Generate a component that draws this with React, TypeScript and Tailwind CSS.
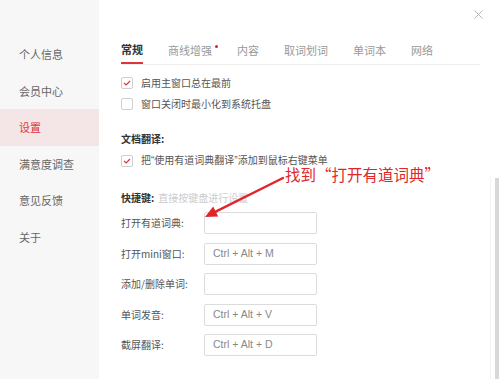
import React from "react";

const CJK = { fontFamily: '"Noto Sans CJK SC", "Noto Sans", sans-serif' };
const LAT = { fontFamily: '"Liberation Sans", "Noto Sans CJK SC", sans-serif' };

function Check({ checked }: { checked: boolean }) {
  return (
    <div className="w-[12px] h-[12px] border border-[#cfcfcf] rounded-[2px] bg-white flex items-center justify-center shrink-0">
      {checked && (
        <svg width="8" height="6" viewBox="0 0 8 6">
          <path d="M1 3 L3.2 5 L7 1" fill="none" stroke="#d9363e" strokeWidth="1.2" />
        </svg>
      )}
    </div>
  );
}

function CheckRow({ checked, children }: { checked: boolean; children: React.ReactNode }) {
  return (
    <div className="h-[21px] flex items-center gap-[8px]">
      <Check checked={checked} />
      <span className="text-[10px] text-[#555] leading-none whitespace-nowrap">{children}</span>
    </div>
  );
}

function KeyRow({ label, value, first }: { label: string; value: string; first?: boolean }) {
  return (
    <div className={`flex items-center h-[22px] ${first ? "mt-[5px]" : "mt-[8.5px]"}`}>
      <span className="w-[83px] text-[10px] text-[#555] leading-none">{label}</span>
      <div
        className="w-[113px] h-[22px] border border-[#dcdcdc] rounded-[2px] bg-white flex items-center pl-[8px] text-[10.5px] text-[#888]"
        style={LAT}
      >
        {value}
      </div>
    </div>
  );
}

export default function App() {
  const side = ["个人信息", "会员中心", "设置", "满意度调查", "意见反馈", "关于"];
  const tabs = ["常规", "商线增强", "内容", "取词划词", "单词本", "网络"];
  return (
    <div className="w-[500px] h-[379px] flex bg-white overflow-hidden" style={CJK}>
      <div className="w-[99px] bg-[#f7f7f7] pt-[36px] shrink-0">
        {side.map((s) => (
          <div
            key={s}
            className={`h-[36.5px] flex items-center pl-[19px] text-[11px] ${
              s === "设置" ? "bg-[#f4e6e6] text-[#d9363e]" : "text-[#666]"
            }`}
          >
            {s}
          </div>
        ))}
      </div>
      <div className="flex-1 relative pl-[22px] pr-[20px]">
        <div className="mt-[37px] h-[28px] flex gap-[25px] border-b border-[#eeeeee]">
          {tabs.map((t, i) => (
            <div
              key={t}
              className={`relative h-full flex items-center text-[11px] ${
                i === 0 ? "font-bold text-[#333] border-b-2 border-[#d9363e] -mb-px" : "text-[#999]"
              }`}
            >
              {t}
              {i === 1 && (
                <span className="absolute right-[-6px] top-[8px] w-[3px] h-[3px] rounded-full bg-[#e02020]" />
              )}
            </div>
          ))}
        </div>
        <div className="flex flex-col mt-[7px]">
          <CheckRow checked>启用主窗口总在最前</CheckRow>
          <CheckRow checked={false}>窗口关闭时最小化到系统托盘</CheckRow>
          <div className="h-[20px] mt-[14px] flex items-center text-[10px] font-bold text-[#333]">文档翻译:</div>
          <div className="mt-[2px]">
            <CheckRow checked>
              把<span style={LAT}>“</span>使用有道词典翻译<span style={LAT}>”</span>添加到鼠标右键菜单
            </CheckRow>
          </div>
          <div className="h-[20px] mt-[16px] flex items-center gap-[4px]">
            <span className="text-[10px] font-bold text-[#333]">快捷键:</span>
            <span className="text-[10px] text-[#cccccc]">直接按键盘进行设置</span>
          </div>
          <KeyRow first label="打开有道词典:" value="" />
          <KeyRow label="打开mini窗口:" value="Ctrl + Alt + M" />
          <KeyRow label="添加/删除单词:" value="" />
          <KeyRow label="单词发音:" value="Ctrl + Alt + V" />
          <KeyRow label="截屏翻译:" value="Ctrl + Alt + D" />
        </div>

        {/* close */}
        <svg className="absolute left-[375px] top-[10px]" width="9" height="9" viewBox="0 0 9 9">
          <path d="M0.5 0.5 L8.5 8.5 M8.5 0.5 L0.5 8.5" stroke="#b5b5b5" strokeWidth="1" />
        </svg>

        {/* annotation */}
        <div className="absolute left-[186px] top-[167px] text-[15.5px] text-[#e0262b] leading-none whitespace-nowrap">
          找到“打开有道词典”
        </div>
        <svg className="absolute left-[99px] top-[170px]" width="90" height="55" viewBox="0 0 90 55">
          <path d="M85 8 L17.7 41.6" fill="none" stroke="#e0262b" strokeWidth="2.4" strokeLinecap="round" />
          <path d="M7 47 L15.2 36.6 L20.2 46.6 Z" fill="#e0262b" />
        </svg>

        {/* scrollbar */}
        <div className="absolute right-0 top-[175px] bottom-0 w-[10px] border-l border-[#f3f3f3]">
          <div className="absolute right-[1px] top-[3px] bottom-0 w-[4px] bg-[#d8d8d8]" />
        </div>
      </div>
    </div>
  );
}
